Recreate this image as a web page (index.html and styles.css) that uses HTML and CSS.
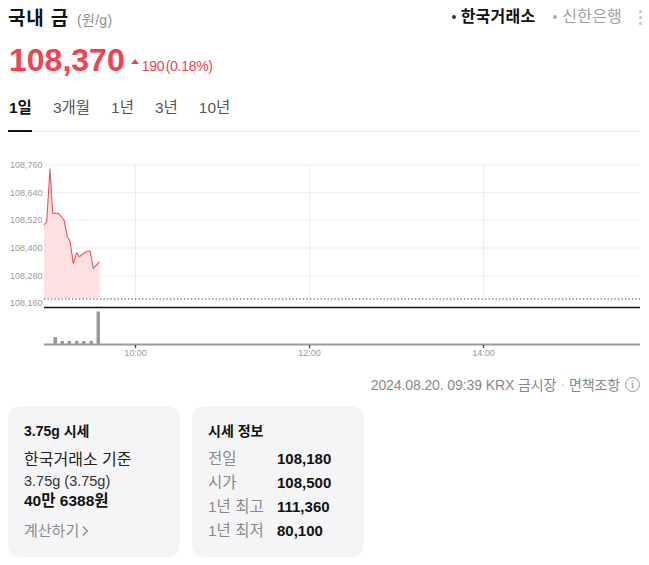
FILE: index.html
```html
<!DOCTYPE html>
<html lang="ko">
<head>
<meta charset="utf-8">
<link rel="stylesheet" href="styles.css">
</head>
<body>
<div class="page">
  <header class="top">
    <h1 class="title">국내 금 <span class="unit">(원/g)</span></h1>
    <div class="sources">
      <span class="src active"><i class="dot"></i>한국거래소</span>
      <span class="src"><i class="dot"></i>신한은행</span>
      <span class="more"><i></i><i></i><i></i></span>
    </div>
  </header>

  <div class="price-row">
    <span class="price">108,370</span>
    <span class="tri"></span>
    <span class="change">190 (0.18%)</span>
  </div>

  <nav class="tabs">
    <span class="tab on">1일</span>
    <span class="tab">3개월</span>
    <span class="tab">1년</span>
    <span class="tab">3년</span>
    <span class="tab">10년</span>
  </nav>

  <svg class="chart" width="632" height="215" viewBox="0 0 632 215">
    <g class="grid">
      <line x1="36" y1="15" x2="632" y2="15"/>
      <line x1="36" y1="42.5" x2="632" y2="42.5"/>
      <line x1="36" y1="70" x2="632" y2="70"/>
      <line x1="36" y1="98" x2="632" y2="98"/>
      <line x1="36" y1="126" x2="632" y2="126"/>
      <line x1="127.5" y1="15" x2="127.5" y2="153"/>
      <line x1="301.5" y1="15" x2="301.5" y2="153"/>
      <line x1="475.5" y1="15" x2="475.5" y2="153"/>
    </g>
    <g class="ylab">
      <text x="2" y="18">108,760</text>
      <text x="2" y="46">108,640</text>
      <text x="2" y="73">108,520</text>
      <text x="2" y="101">108,400</text>
      <text x="2" y="129">108,280</text>
      <text x="2" y="156">108,160</text>
    </g>
    <polygon class="area" points="36,75 38.7,71.7 42,19 44.7,63.3 50.3,63.3 56,70 59.3,86.7 62,91 65.3,113.3 68.7,102.7 71.3,106.7 77,102.3 82,100.7 85.3,118.3 91.5,111.7 91.5,148 36,148"/>
    <polyline class="line" points="36,75 38.7,71.7 42,19 44.7,63.3 50.3,63.3 56,70 59.3,86.7 62,91 65.3,113.3 68.7,102.7 71.3,106.7 77,102.3 82,100.7 85.3,118.3 91.5,111.7"/>
    <line class="prev" x1="36" y1="149" x2="632" y2="149"/>
    <line class="sep" x1="36" y1="157.5" x2="632" y2="157.5"/>
    <g class="vol">
      <rect x="45.5" y="187" width="3.5" height="7"/>
      <rect x="52.5" y="191" width="3.5" height="3"/>
      <rect x="59.5" y="191" width="3.5" height="3"/>
      <rect x="67" y="191" width="3.5" height="3"/>
      <rect x="74" y="191" width="3.5" height="3"/>
      <rect x="81.5" y="191" width="3.5" height="3"/>
      <rect x="88.5" y="161.5" width="3.5" height="32.5"/>
    </g>
    <line class="axis" x1="36" y1="194.5" x2="632" y2="194.5"/>
    <g class="ticks">
      <line x1="127.5" y1="195" x2="127.5" y2="198"/>
      <line x1="301.5" y1="195" x2="301.5" y2="198"/>
      <line x1="475.5" y1="195" x2="475.5" y2="198"/>
    </g>
    <g class="xlab">
      <text x="127.5" y="206">10:00</text>
      <text x="301.5" y="206">12:00</text>
      <text x="475.5" y="206">14:00</text>
    </g>
  </svg>

  <div class="meta">
    <span>2024.08.20. 09:39 KRX 금시장</span>
    <span class="sep-dot">·</span>
    <span>면책조항</span>
    <span class="info">i</span>
  </div>

  <section class="cards">
    <div class="card">
      <h2 class="card-title">3.75g 시세</h2>
      <p class="line1">한국거래소 기준</p>
      <p class="line2">3.75g (3.75g)</p>
      <p class="won">40만 6388원</p>
      <p class="calc">계산하기 <svg width="8" height="12" viewBox="0 0 8 12"><path d="M2 1.5 L6.5 6 L2 10.5" fill="none" stroke="#8a8a8a" stroke-width="1.2"/></svg></p>
    </div>
    <div class="card">
      <h2 class="card-title">시세 정보</h2>
      <dl class="info-grid">
        <dt>전일</dt><dd>108,180</dd>
        <dt>시가</dt><dd>108,500</dd>
        <dt>1년 최고</dt><dd>111,360</dd>
        <dt>1년 최저</dt><dd>80,100</dd>
      </dl>
    </div>
  </section>
</div>
</body>
</html>
```

FILE: styles.css
```css
* { box-sizing: border-box; }
body {
  margin: 0;
  background: #fff;
  font-family: "Liberation Sans", "Noto Sans CJK KR", sans-serif;
  color: #111;
}
.page {
  width: 649px;
  padding: 0 9px 0 8px;
}
.top {
  display: flex;
  justify-content: space-between;
  align-items: center;
  height: 36px;
  padding-top: 3px;
}
.title {
  margin: 0;
  font-size: 19px;
  font-weight: 700;
  line-height: 24px;
  letter-spacing: 0.8px;
}
.unit {
  font-size: 14px;
  font-weight: 400;
  color: #8e8e8e;
  margin-left: 2px;
  letter-spacing: 0.3px;
}
.sources {
  display: flex;
  align-items: center;
  font-size: 16px;
  line-height: 20px;
  margin-top: -5px;
}
.src {
  display: flex;
  align-items: center;
  color: #a0a0a0;
  margin-left: 18px;
  letter-spacing: 0.2px;
}
.src.active { color: #111; font-weight: 700; }
.dot {
  width: 4px;
  height: 4px;
  border-radius: 50%;
  background: currentColor;
  margin-right: 5px;
  opacity: 0.85;
}
.src:not(.active) .dot { background: #999; }
.more {
  display: flex;
  flex-direction: column;
  gap: 3px;
  margin-left: 17px;
  margin-right: -2px;
}
.more i {
  width: 3px;
  height: 3px;
  border-radius: 50%;
  background: #c4c4c4;
}
.price-row {
  display: flex;
  align-items: baseline;
  height: 50px;
  padding-top: 5px;
  color: #f0434f;
}
.price {
  font-size: 32px;
  font-weight: 700;
  line-height: 38px;
  margin-left: 1px;
}
.tri {
  width: 0;
  height: 0;
  border-left: 4px solid transparent;
  border-right: 4px solid transparent;
  border-bottom: 5px solid #f0434f;
  margin: 0 3px 0 6px;
  position: relative;
  top: -7px;
}
.change {
  font-size: 14px;
  letter-spacing: -0.3px;
  word-spacing: -2px;
}
.tabs {
  display: flex;
  height: 46px;
  align-items: center;
  border-bottom: 1px solid #ececec;
  font-size: 15.5px;
}
.tab {
  color: #555;
  margin-right: 21px;
  height: 46px;
  line-height: 44px;
  border-bottom: 2px solid transparent;
  margin-bottom: -1px;
}
.tab.on {
  color: #111;
  font-weight: 700;
  border-bottom-color: #111;
  padding-left: 1px;
}
.chart {
  display: block;
  margin-top: 18px;
}
.grid line { stroke: #eeeeee; stroke-width: 1; }
.ylab text {
  font-family: "Liberation Sans", sans-serif;
  font-size: 9px;
  fill: #9a9a9a;
}
.area { fill: #fde0e0; }
.line { fill: none; stroke: #f0505a; stroke-width: 1.1; stroke-linejoin: round; }
.prev { stroke: #7a7a7a; stroke-width: 1.3; stroke-dasharray: 1.3 2.2; }
.sep { stroke: #111; stroke-width: 1.3; }
.vol rect { fill: #999; }
.axis { stroke: #999; stroke-width: 2.2; }
.ticks line { stroke: #444; stroke-width: 1.3; }
.xlab text {
  font-family: "Liberation Sans", sans-serif;
  font-size: 9px;
  fill: #9a9a9a;
  text-anchor: middle;
}
.meta {
  display: flex;
  justify-content: flex-end;
  align-items: center;
  font-size: 14px;
  color: #888;
  margin-top: 7px;
  height: 24px;
  letter-spacing: -0.1px;
}
.sep-dot { margin: 0 4px; color: #bbb; }
.info {
  width: 15px;
  height: 15px;
  border: 1px solid #999;
  border-radius: 50%;
  font-size: 11px;
  line-height: 13px;
  text-align: center;
  margin-left: 5px;
  color: #888;
  font-family: "Liberation Serif", serif;
}
.cards {
  display: flex;
  gap: 12px;
  margin-top: 10px;
}
.card {
  width: 172px;
  height: 151px;
  background: #f5f5f7;
  border-radius: 12px;
  padding: 16px 16px;
}
.card p { margin: 0; }
.card-title {
  margin: 0 0 8px;
  font-size: 14px;
  font-weight: 700;
  line-height: 19px;
}
.line1 { font-size: 16px; line-height: 22px; color: #222; }
.line2 { font-size: 14.5px; line-height: 20px; color: #333; }
.won { font-size: 15.5px; font-weight: 700; line-height: 20px; }
.calc {
  margin-top: 10px !important;
  font-size: 15px;
  color: #8a8a8a;
  line-height: 20px;
  display: flex;
  align-items: center;
  gap: 2px;
}
.info-grid {
  display: grid;
  grid-template-columns: 69px 1fr;
  row-gap: 4px;
  margin: 0;
  font-size: 15.5px;
  line-height: 20px;
}
.info-grid dt { color: #8a8a8a; }
.info-grid dd { margin: 0; font-weight: 700; color: #111; font-size: 15px; }
```
